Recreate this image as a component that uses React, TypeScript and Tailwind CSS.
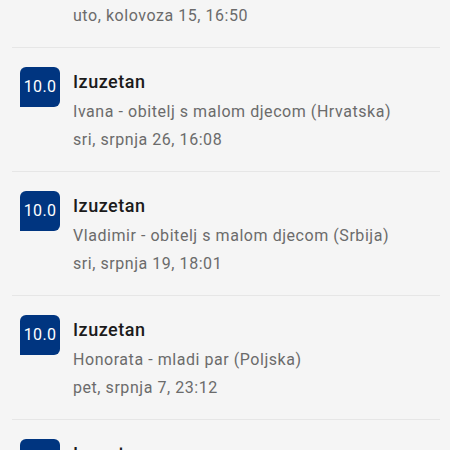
import React from "react";

type Review = { name: string; date: string };

const reviews: Review[] = [
  { name: "Ivana - obitelj s malom djecom (Hrvatska)", date: "sri, srpnja 26, 16:08" },
  { name: "Vladimir - obitelj s malom djecom (Srbija)", date: "sri, srpnja 19, 18:01" },
  { name: "Honorata - mladi par (Poljska)", date: "pet, srpnja 7, 23:12" },
  { name: "Marko - par (Hrvatska)", date: "ned, lipnja 25, 10:45" },
];

function Divider() {
  return <div className="ml-3 mr-[10px] h-px bg-[#e6e6e6]" />;
}

function Row({ r }: { r: Review }) {
  return (
    <div className="flex items-start pl-5 pr-3 pt-[19px] pb-[16.5px]">
      <div className="flex h-10 w-10 shrink-0 items-center justify-center rounded-[6px_6px_6px_0] bg-[#003580] text-[16px] tracking-[0.3px] text-white">
        10.0
      </div>
      <div className="ml-[13px] flex flex-col pt-px">
        <div className="text-[18px] font-medium leading-[28px] tracking-[0.5px] text-[#1b1b1b]">Izuzetan</div>
        <div className="mt-[2.5px] text-[16px] leading-[28px] tracking-[0.55px] text-[#6b6b6b]">{r.name}</div>
        <div className="text-[16px] leading-[28px] tracking-[0.55px] text-[#6b6b6b]">{r.date}</div>
      </div>
    </div>
  );
}

export default function App() {
  return (
    <div
      className="h-[450px] w-[450px] overflow-hidden bg-[#f5f5f5]"
      style={{ fontFamily: "Roboto, 'Noto Sans', sans-serif" }}
    >
      <div className="pl-[73px] pt-[1.5px] pb-[17px] text-[16px] leading-[28px] tracking-[0.55px] text-[#6b6b6b]">
        uto, kolovoza 15, 16:50
      </div>
      {reviews.map((r, i) => (
        <React.Fragment key={i}>
          <Divider />
          <Row r={r} />
        </React.Fragment>
      ))}
    </div>
  );
}
